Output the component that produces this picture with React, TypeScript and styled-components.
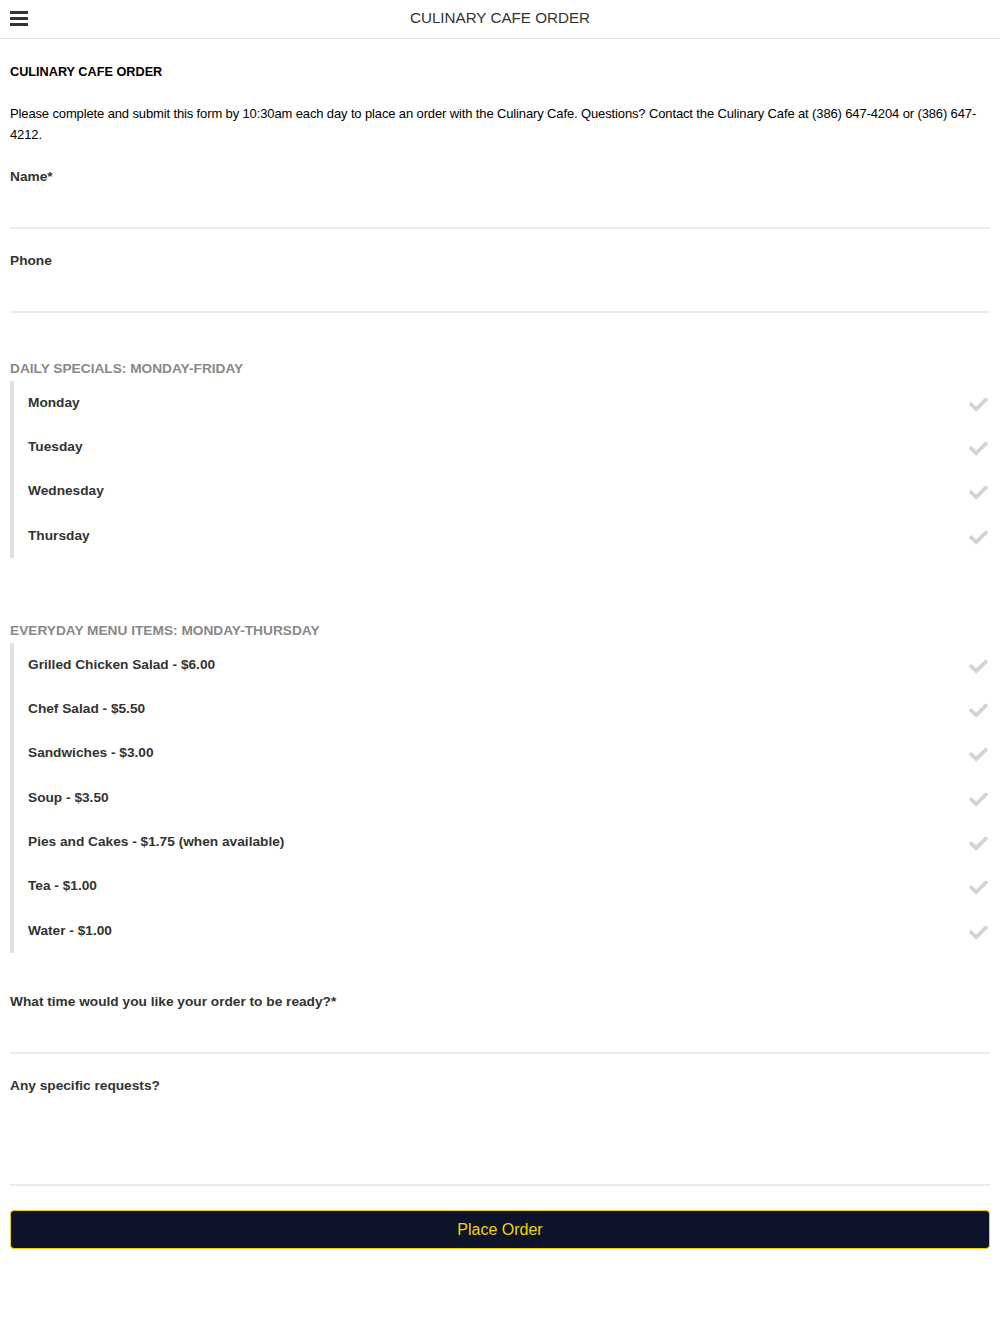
import React from "react";
import styled, { createGlobalStyle } from "styled-components";
import { FaCheck } from "react-icons/fa";

const Global = createGlobalStyle`
  html, body { margin: 0; padding: 0; background: #fff; }
  body { font-family: "Liberation Sans", Arial, Helvetica, sans-serif; color: #333; }
  * { box-sizing: border-box; }
`;

const Header = styled.header`
  height: 39px;
  border-bottom: 1px solid #e3e3e3;
  display: flex;
  align-items: center;
  justify-content: center;
  position: relative;
`;

const Burger = styled.div`
  position: absolute;
  left: 10px;
  top: 11px;
  width: 18px;
  display: flex;
  flex-direction: column;
  gap: 3px;
  span {
    display: block;
    height: 3px;
    background: #333;
    border-radius: 0.5px;
  }
`;

const HeaderTitle = styled.h1`
  margin: 0;
  font-size: 15.2px;
  font-weight: 400;
  color: #333;
  margin-top: -3px;
`;

const Main = styled.main`
  padding: 26px 10px 60px;
`;

const FormTitle = styled.h2`
  margin: 0;
  font-size: 12.7px;
  line-height: 15px;
  font-weight: 700;
  color: #000;
`;

const Intro = styled.p`
  margin: 23px 0 0;
  font-size: 13px;
  letter-spacing: -0.13px;
  line-height: 21px;
  color: #000;
`;

const Field = styled.div<{ $top: number }>`
  margin-top: ${(p) => p.$top}px;
  display: flex;
  flex-direction: column;
`;

const Label = styled.label`
  font-size: 13.7px;
  line-height: 17px;
  font-weight: 700;
  color: #333;
`;

const Input = styled.div<{ $h: number }>`
  height: ${(p) => p.$h}px;
  border-bottom: 2px solid #ebebeb;
`;

const SectionTitle = styled.h3<{ $top: number }>`
  margin: ${(p) => p.$top}px 0 0;
  font-size: 13.7px;
  line-height: 17px;
  font-weight: 700;
  color: #888;
  text-transform: uppercase;
`;

const Options = styled.div`
  margin-top: 4px;
  border-left: 4px solid #e0e0e0;
  display: flex;
  flex-direction: column;
`;

const Option = styled.div`
  height: 44.3px;
  display: flex;
  align-items: center;
  justify-content: space-between;
  padding: 0 2px 2px 14px;
  font-size: 13.7px;
  font-weight: 700;
  color: #333;
`;

const Check = styled(FaCheck)`
  color: #d4d4d4;
  width: 19px;
  height: 19px;
  margin-top: 4px;
`;

const Button = styled.button`
  margin-top: 24px;
  width: 100%;
  height: 39px;
  background: #0d1429;
  border: 1.5px solid #f2cf00;
  border-radius: 4px;
  color: #f5d300;
  font-family: "Liberation Sans", Arial, sans-serif;
  font-size: 16px;
  cursor: pointer;
`;

const specials = ["Monday", "Tuesday", "Wednesday", "Thursday"];
const everyday = [
  "Grilled Chicken Salad - $6.00",
  "Chef Salad - $5.50",
  "Sandwiches - $3.00",
  "Soup - $3.50",
  "Pies and Cakes - $1.75 (when available)",
  "Tea - $1.00",
  "Water - $1.00",
];

export default function App() {
  return (
    <>
      <Global />
      <Header>
        <Burger>
          <span />
          <span />
          <span />
        </Burger>
        <HeaderTitle>CULINARY CAFE ORDER</HeaderTitle>
      </Header>
      <Main>
        <FormTitle>CULINARY CAFE ORDER</FormTitle>
        <Intro>
          Please complete and submit this form by 10:30am each day to place an order with the Culinary Cafe. Questions? Contact the Culinary Cafe at (386) 647-4204 or (386) 647-4212.
        </Intro>
        <Field $top={23}>
          <Label>Name*</Label>
          <Input $h={44} />
        </Field>
        <Field $top={23}>
          <Label>Phone</Label>
          <Input $h={44} />
        </Field>
        <SectionTitle $top={47}>Daily Specials: Monday-Friday</SectionTitle>
        <Options>
          {specials.map((s) => (
            <Option key={s}>
              {s}
              <Check />
            </Option>
          ))}
        </Options>
        <SectionTitle $top={64}>Everyday Menu Items: Monday-Thursday</SectionTitle>
        <Options>
          {everyday.map((s) => (
            <Option key={s}>
              {s}
              <Check />
            </Option>
          ))}
        </Options>
        <Field $top={40}>
          <Label>What time would you like your order to be ready?*</Label>
          <Input $h={44} />
        </Field>
        <Field $top={23}>
          <Label>Any specific requests?</Label>
          <Input $h={92} />
        </Field>
        <Button>Place Order</Button>
      </Main>
    </>
  );
}
